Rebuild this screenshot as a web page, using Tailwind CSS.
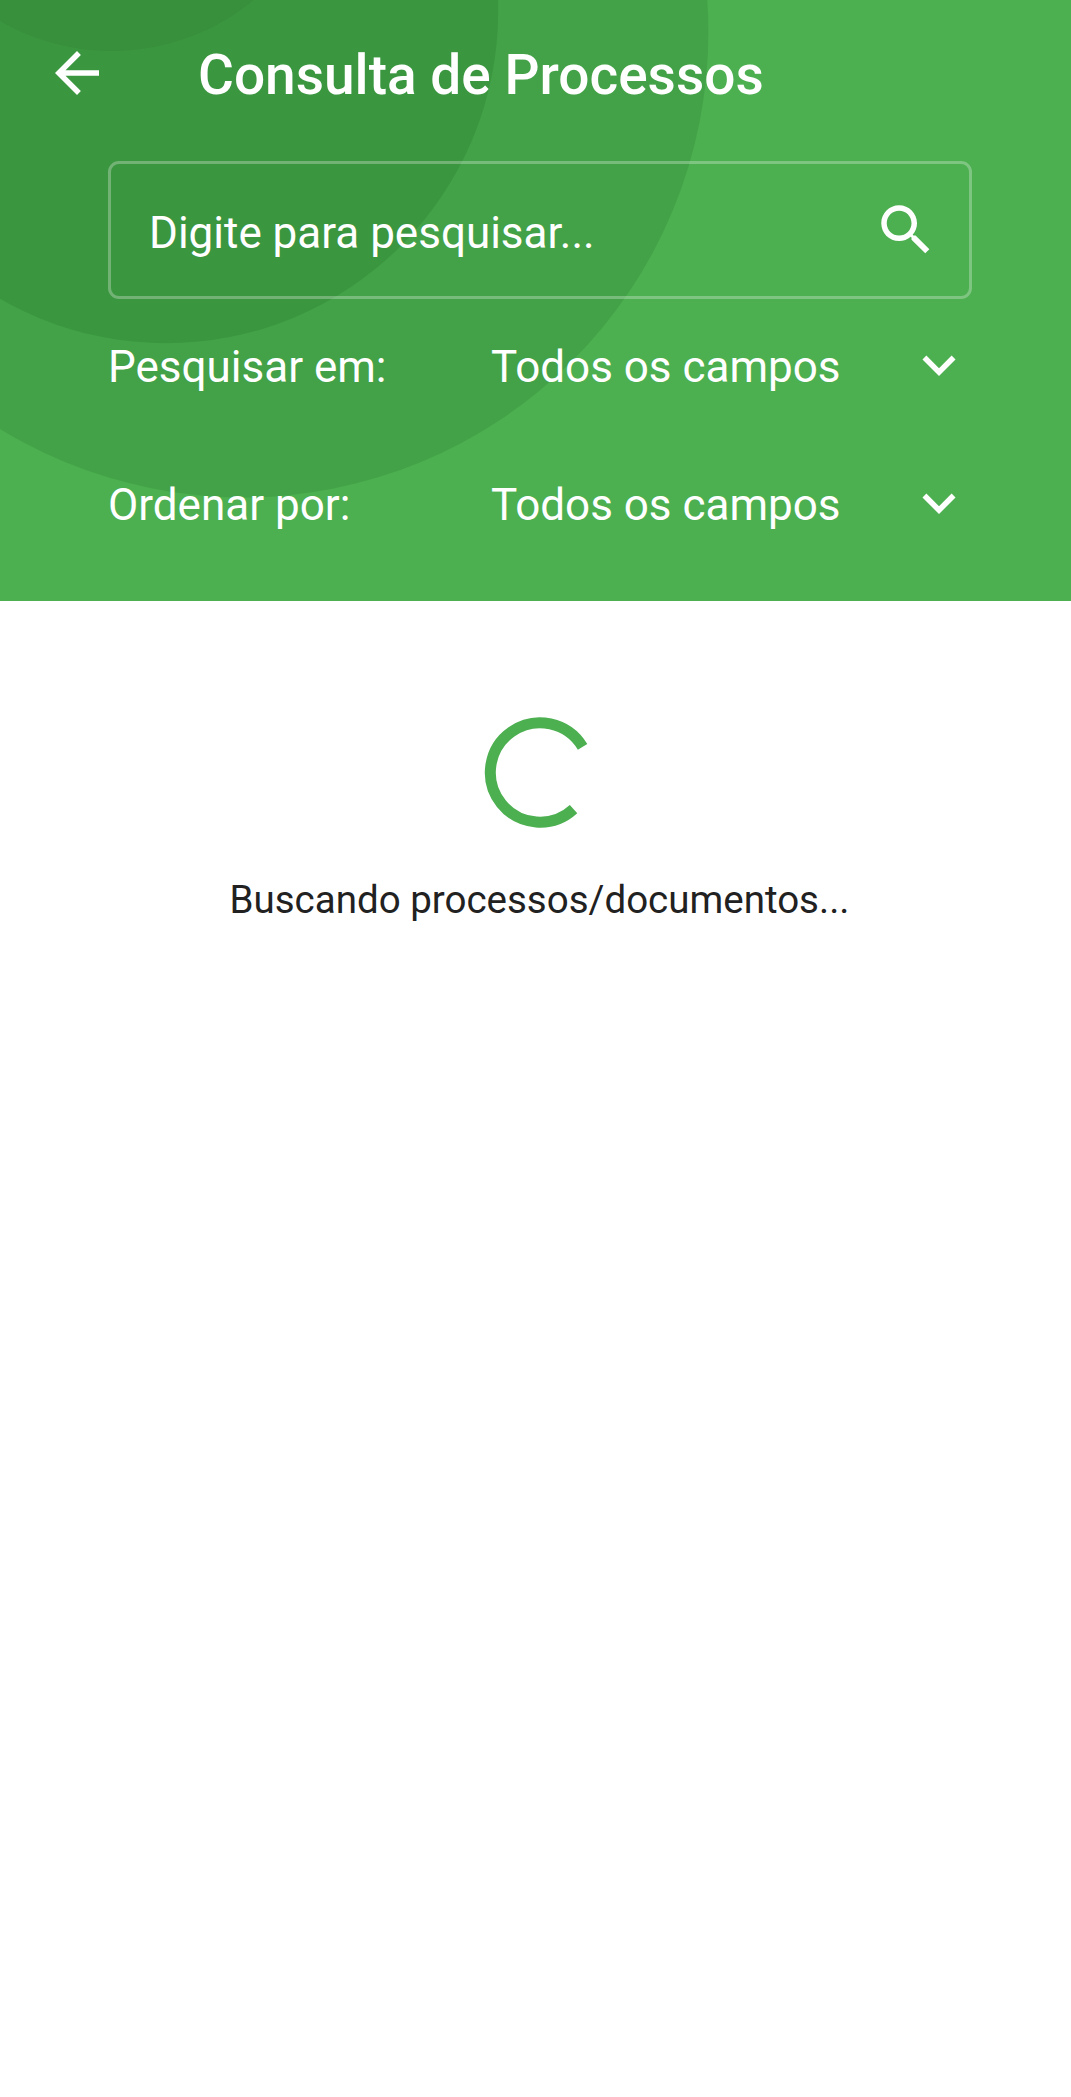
<!DOCTYPE html>
<html lang="pt-BR">
<head>
  <meta charset="UTF-8">
  <meta name="viewport" content="width=device-width, initial-scale=1.0">
  <title>Consulta de Processos</title>
  <script src="https://cdn.jsdelivr.net/npm/@tailwindcss/browser@4"></script>
</head>
<body class="bg-white font-[Roboto,sans-serif]">

<header class="relative h-[601px] overflow-hidden bg-[#4caf50] text-white">
  <!-- background circles -->
  <svg class="absolute inset-0" width="1071" height="601" viewBox="0 0 1071 601">
    <circle cx="243" cy="32" r="465.4" fill="#43a247" />
    <circle cx="166" cy="11" r="332.2" fill="#3b9640" />
    <circle cx="111.7" cy="-172" r="223" fill="#388f3c" />
  </svg>

  <div class="relative">
    <div class="flex h-[161px] pl-[44px]">
      <svg class="mt-[40px] size-[66px]" viewBox="0 0 24 24" fill="currentColor">
        <path d="M20 11H7.83l5.59-5.59L12 4l-8 8 8 8 1.41-1.41L7.83 13H20v-2z" />
      </svg>
      <h1 class="mt-[42px] ml-[88px] text-[55px] leading-[66px] font-medium whitespace-nowrap">Consulta de Processos</h1>
    </div>

    <div class="ml-[108px] flex h-[138px] w-[864px] justify-between rounded-[11px] border-[3px] border-white/28 pr-[30px] pl-[38px]">
      <span class="mt-[40px] text-[44px] leading-[58px] whitespace-nowrap">Digite para pesquisar...</span>
      <svg class="mt-[33px] size-[66px]" viewBox="0 0 24 24" fill="currentColor">
        <path d="M15.5 14h-.79l-.28-.27C15.41 12.59 16 11.11 16 9.5 16 5.91 13.09 3 9.5 3S3 5.91 3 9.5 5.91 16 9.5 16c1.61 0 3.09-.59 4.23-1.57l.27.28v.79l5 4.99L20.49 19l-4.99-5zm-6 0C7.01 14 5 11.99 5 9.5S7.01 5 9.5 5 14 7.01 14 9.5 11.99 14 9.5 14z" />
      </svg>
    </div>

    <div class="ml-[108px] flex h-[138px] w-[864px] items-start pt-[33px] text-[44px] leading-[67px] whitespace-nowrap">
      <span class="mt-0.5 w-[383px]">Pesquisar em:</span>
      <span class="mt-0.5 grow">Todos os campos</span>
      <svg class="size-[66px]" viewBox="0 0 24 24" fill="currentColor">
        <path d="M7.41 8.59 12 13.17l4.59-4.58L18 10l-6 6-6-6z" />
      </svg>
    </div>

    <div class="ml-[108px] flex h-[138px] w-[864px] items-start pt-[33px] text-[44px] leading-[67px] whitespace-nowrap">
      <span class="mt-0.5 w-[383px]">Ordenar por:</span>
      <span class="mt-0.5 grow">Todos os campos</span>
      <svg class="size-[66px]" viewBox="0 0 24 24" fill="currentColor">
        <path d="M7.41 8.59 12 13.17l4.59-4.58L18 10l-6 6-6-6z" />
      </svg>
    </div>
  </div>
</header>

<main class="flex w-[1079px] flex-col items-center pt-[111px]">
  <svg class="size-[120px]" viewBox="-60 -60.5 120 120" fill="none" stroke="#4caf50" stroke-width="11">
    <path d="M42.56 -25.57A49.65 49.65 0 1 0 33.54 36.6" />
  </svg>
  <p class="mt-[40px] text-[38.5px] leading-[56px] whitespace-nowrap text-[#212121]">Buscando processos/documentos...</p>
</main>

</body>
</html>
